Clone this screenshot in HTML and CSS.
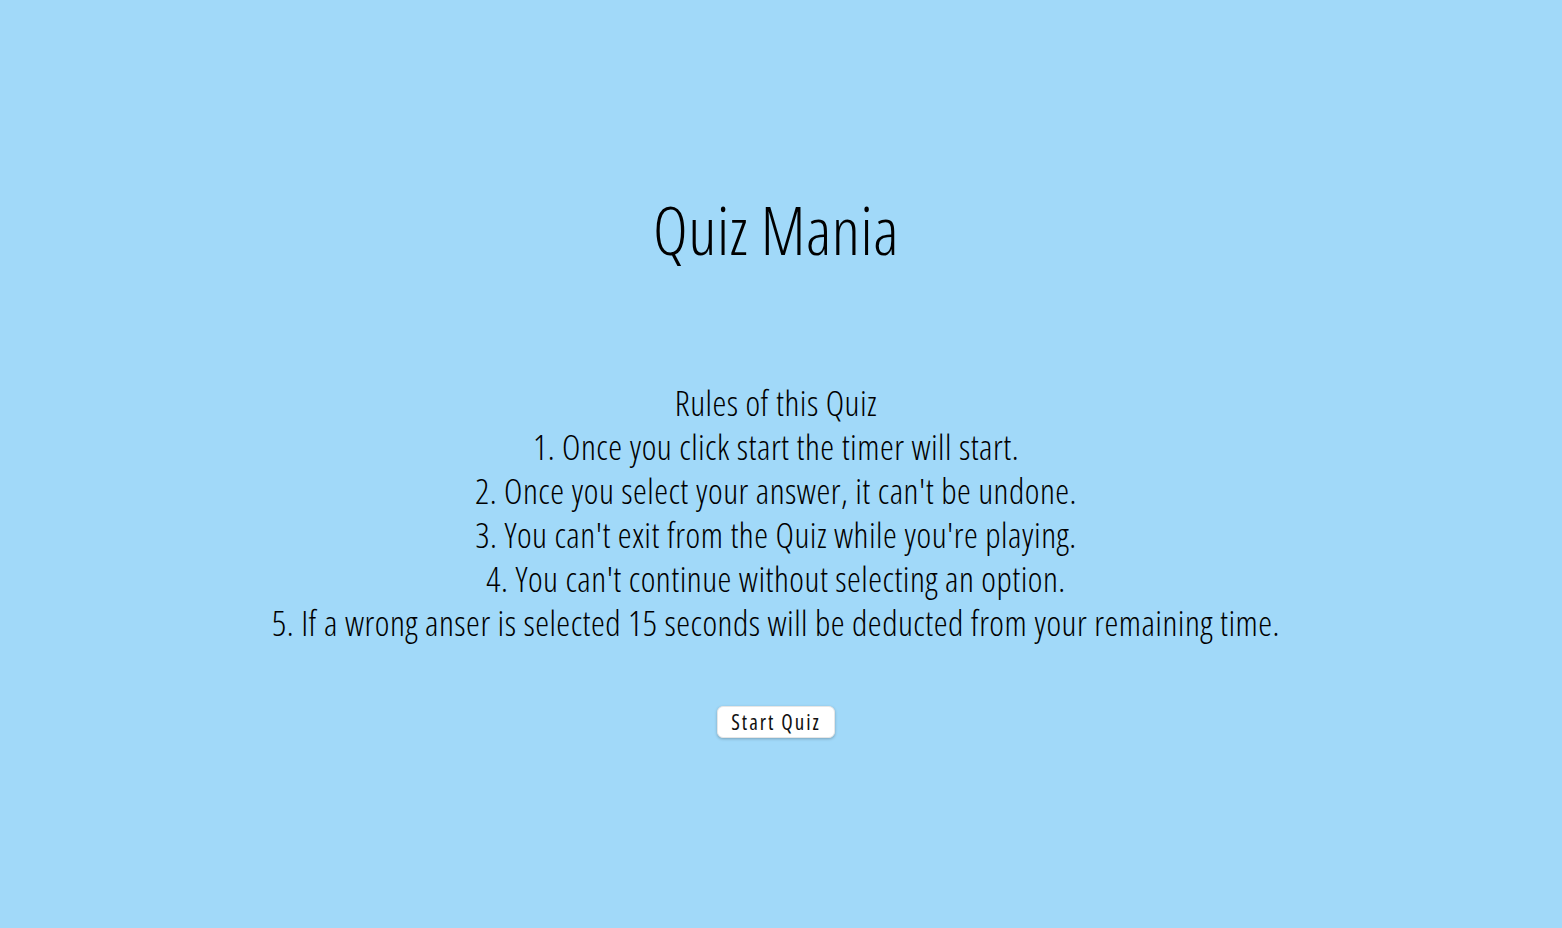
FILE: index.html
```html
<!DOCTYPE html>
<html lang="en">
<head>
<meta charset="utf-8">
<title>Quiz Mania</title>
<link rel="stylesheet" href="styles.css">
</head>
<body>
<main class="page">
  <h1 class="title">Quiz Mania</h1>
  <section class="rules">
    <p>Rules of this Quiz</p>
    <p>1. Once you click start the timer will start.</p>
    <p>2. Once you select your answer, it can't be undone.</p>
    <p>3. You can't exit from the Quiz while you're playing.</p>
    <p>4. You can't continue without selecting an option.</p>
    <p>5. If a wrong anser is selected 15 seconds will be deducted from your remaining time.</p>
  </section>
  <button class="start-btn" type="button">Start Quiz</button>
</main>
</body>
</html>
```
FILE: styles.css
```css
html, body {
  margin: 0;
  padding: 0;
}
body {
  background: #a1d9f9;
  color: #000;
  font-family: "Open Sans", "Roboto", sans-serif;
  font-stretch: 75%;
}
.page {
  display: flex;
  flex-direction: column;
  align-items: center;
  padding: 189px 10px 0 0;
  min-height: 100vh;
  box-sizing: border-box;
}
.title {
  margin: 0;
  font-size: 66px;
  line-height: 80px;
  font-weight: 340;
  letter-spacing: 0.4px;
}
.rules {
  margin-top: 112px;
  text-align: center;
  font-size: 35px;
  line-height: 44px;
  font-weight: 355;
  letter-spacing: 0.47px;
}
.rules p {
  margin: 0;
}
.start-btn {
  margin-top: 61px;
  height: 32px;
  width: 118px;
  padding: 0;
  background: #fff;
  border: 1px solid #e6e6e6;
  border-radius: 6px;
  box-shadow: 0 1px 3px rgba(0,0,0,0.25);
  font-family: inherit;
  font-stretch: 75%;
  font-size: 21px;
  font-weight: 420;
  letter-spacing: 2px;
  color: #111;
}
```
